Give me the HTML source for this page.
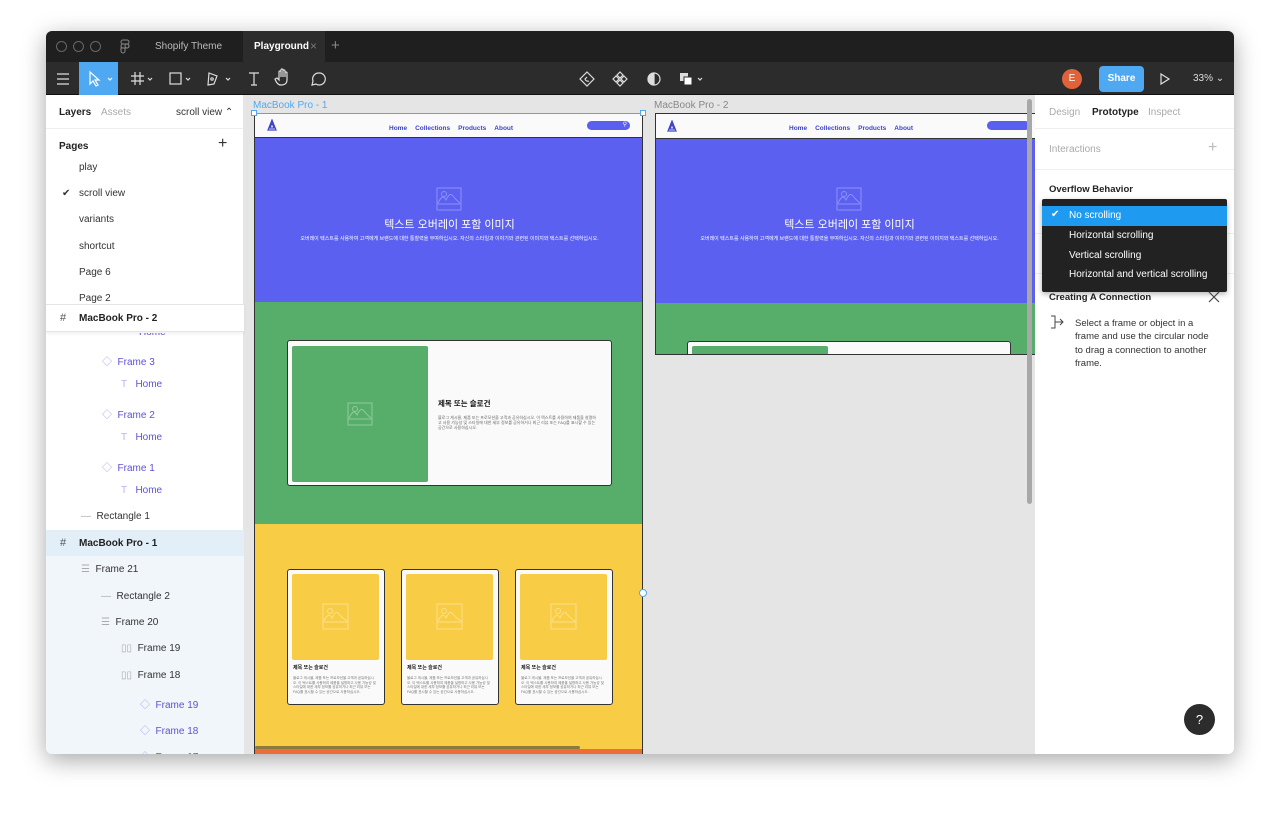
<!DOCTYPE html>
<html><head><meta charset="utf-8">
<style>
*{box-sizing:border-box;margin:0;padding:0}
body{width:1280px;height:815px;background:#fff;font-family:"Liberation Sans","Noto Sans CJK KR",sans-serif;position:relative;overflow:hidden;font-size:10px;color:#222}
.a{position:absolute}
.win{left:46px;top:31px;width:1188px;height:723px;border-radius:6px;overflow:hidden;box-shadow:0 6px 24px rgba(0,0,0,.35);background:#e5e5e5}
.tl{color:#333;font-size:10px}
.lp{color:#5d52d8}
.nav a{color:#4044c9;font-weight:bold;font-size:6.5px;margin:0 4px;text-decoration:none}
.kr{font-family:"Liberation Sans","Noto Sans CJK KR",sans-serif}
</style></head><body>
<div class="a win">
 <div class="a" style="left:0;top:0;width:1188px;height:31px;background:#1f1f1f"></div>
 <div class="a" style="left:197px;top:0;width:82px;height:31px;background:#2c2c2c"></div>
 <div class="a" style="left:10px;top:10px;width:11px;height:11px;border:1px solid #666;border-radius:50%"></div>
 <div class="a" style="left:27px;top:10px;width:11px;height:11px;border:1px solid #666;border-radius:50%"></div>
 <div class="a" style="left:44px;top:10px;width:11px;height:11px;border:1px solid #666;border-radius:50%"></div>
 <svg class="a" style="left:74px;top:8px" width="10" height="15" viewBox="0 0 10 15"><g fill="none" stroke="#888" stroke-width="1"><rect x="1" y="1" width="8" height="4" rx="2"/><rect x="1" y="5" width="8" height="4" rx="2"/><circle cx="7" cy="7" r="2"/><path d="M1 9h4v3a2 2 0 1 1-4 0z"/></g></svg>
 <div class="a" style="left:109px;top:10px;color:#bbb;font-size:10px">Shopify Theme</div>
 <div class="a" style="left:208px;top:10px;color:#fff;font-size:10px;font-weight:bold">Playground</div>
 <div class="a" style="left:264px;top:8px;color:#777;font-size:12px">×</div>
 <div class="a" style="left:285px;top:6px;color:#888;font-size:15px">+</div>
 <div class="a" style="left:0;top:31px;width:1188px;height:33px;background:#2c2c2c;border-bottom:1px solid #111"></div>
 <div class="a" style="left:33px;top:31px;width:39px;height:33px;background:#4fa9f2"></div>
 <svg class="a" style="left:0;top:31px" width="300" height="33"><g fill="none" stroke="#ddd" stroke-width="1.2">
  <path d="M11 12h12M11 17h12M11 22h12"/>
  <path d="M44 10l0 12 3-3 3 5 2-1-3-5 4 0z" stroke="#fff"/><path d="M62 16l2 2 2-2" stroke="#fff"/>
  <path d="M89 10v13M94 10v13M85 14h13M85 19h13"/><path d="M102 16l2 2 2-2"/>
  <rect x="124" y="11" width="11" height="11"/><path d="M140 16l2 2 2-2"/>
  <path d="M163 11l8 3 -3 8 -6 1z"/><circle cx="166" cy="17" r="1.2"/><path d="M180 16l2 2 2-2"/>
  <path d="M203 11h10M208 11v12M205 23h6"/>
  <path d="M235 23c-3 0-5-3-6-6l2-1 2 2v-8a1 1 0 0 1 2 0v5-7a1 1 0 0 1 2 0v7-6a1 1 0 0 1 2 0v6-4a1 1 0 0 1 2 0v7c0 3-2 5-6 5z"/>
  <path d="M273 11a6 6 0 1 1-3 11l-4 1 1-4a6 6 0 0 1 6-8z"/>
 </g></svg>
 <svg class="a" style="left:530px;top:31px" width="140" height="33"><g fill="none" stroke="#ddd" stroke-width="1.2">
  <path d="M11 10l7 7-7 7-7-7z"/><path d="M13 19a3 3 0 0 1-4-2l2-2"/>
  <path d="M44 10l3 3-3 3-3-3zM44 18l3 3-3 3-3-3zM40 14l3 3-3 3-3-3zM48 14l3 3-3 3-3-3z"/>
  <circle cx="78" cy="17" r="6"/><path d="M78 11a6 6 0 0 0 0 12z" fill="#ddd"/>
  <path d="M112 22l2 2 2-2" transform="translate(10 -6)"/>
 </g><rect x="104" y="11" width="8" height="8" fill="#ddd"/><rect x="108" y="15" width="8" height="8" fill="#fff" stroke="#2c2c2c"/></svg>
 <div class="a" style="left:1016px;top:38px;width:20px;height:20px;border-radius:50%;background:#e0623a;color:#fff;font-size:10px;text-align:center;line-height:20px">E</div>
 <div class="a" style="left:1053px;top:35px;width:45px;height:26px;border-radius:4px;background:#4fa9f2;color:#fff;font-size:10px;font-weight:bold;text-align:center;line-height:26px">Share</div>
 <svg class="a" style="left:1113px;top:41px" width="12" height="14"><path d="M2 2l8 5-8 5z" fill="none" stroke="#ddd" stroke-width="1.2"/></svg>
 <div class="a" style="left:1147px;top:42px;color:#ddd;font-size:10px">33% ⌄</div>
 <div class="a" style="left:0;top:64px;width:198px;height:659px;background:#fff;border-right:1px solid #e5e5e5"></div>
 <div class="a" style="left:13px;top:76px;font-size:10px;font-weight:bold;color:#222">Layers</div>
 <div class="a" style="left:55px;top:76px;font-size:10px;color:#aaa">Assets</div>
 <div class="a" style="left:130px;top:76px;font-size:10px;color:#333">scroll view ⌃</div>
 <div class="a" style="left:0;top:97px;width:198px;height:1px;background:#eee"></div>
 <div class="a" style="left:13px;top:110px;font-size:10px;font-weight:bold">Pages</div>
 <div class="a" style="left:172px;top:104px;font-size:16px;color:#333">+</div>
 <div class="a tl" style="left:33px;top:131px">play</div>
 <div class="a tl" style="left:16px;top:157px">✔</div>
 <div class="a tl" style="left:33px;top:157px">scroll view</div>
 <div class="a tl" style="left:33px;top:183px">variants</div>
 <div class="a tl" style="left:33px;top:210px">shortcut</div>
 <div class="a tl" style="left:33px;top:236px">Page 6</div>
 <div class="a tl" style="left:33px;top:262px">Page 2</div>
 <div class="a lp" style="left:93px;top:302px;overflow:hidden;height:5px;line-height:10px;font-size:10px"><span style="position:relative;top:-5px">Home</span></div>
 <div class="a" style="left:0;top:273px;width:198px;height:28px;background:#fff;border-top:1px solid #e5e5e5;border-bottom:1px solid #e5e5e5;box-shadow:0 2px 3px rgba(0,0,0,.06)"></div>
 <div class="a" style="left:14px;top:281px;font-size:11px;color:#555">#</div>
 <div class="a" style="left:33px;top:282px;font-size:10px;font-weight:bold">MacBook Pro - 2</div>
 <div class="a lp" style="left:56px;top:322px"><span style="color:#a9a0ee">◇</span>&nbsp; Frame 3</div>
 <div class="a lp" style="left:75px;top:348px"><span style="color:#b9b2f0">T</span>&nbsp;&nbsp; Home</div>
 <div class="a lp" style="left:56px;top:375px"><span style="color:#a9a0ee">◇</span>&nbsp; Frame 2</div>
 <div class="a lp" style="left:75px;top:401px"><span style="color:#b9b2f0">T</span>&nbsp;&nbsp; Home</div>
 <div class="a lp" style="left:56px;top:428px"><span style="color:#a9a0ee">◇</span>&nbsp; Frame 1</div>
 <div class="a lp" style="left:75px;top:454px"><span style="color:#b9b2f0">T</span>&nbsp;&nbsp; Home</div>
 <div class="a tl" style="left:35px;top:480px"><span style="color:#aaa">—</span>&nbsp; Rectangle 1</div>
 <div class="a" style="left:0;top:499px;width:198px;height:26px;background:#e2eef8"></div>
 <div class="a" style="left:0;top:525px;width:198px;height:198px;background:#f1f6fb"></div>
 <div class="a" style="left:14px;top:506px;font-size:11px;color:#555">#</div>
 <div class="a" style="left:33px;top:507px;font-size:10px;font-weight:bold">MacBook Pro - 1</div>
 <div class="a tl" style="left:35px;top:533px"><span style="color:#aaa">☰</span>&nbsp; Frame 21</div>
 <div class="a tl" style="left:55px;top:560px"><span style="color:#aaa">—</span>&nbsp; Rectangle 2</div>
 <div class="a tl" style="left:55px;top:586px"><span style="color:#aaa">☰</span>&nbsp; Frame 20</div>
 <div class="a tl" style="left:75px;top:612px"><span style="color:#aaa">▯▯</span>&nbsp; Frame 19</div>
 <div class="a tl" style="left:75px;top:639px"><span style="color:#aaa">▯▯</span>&nbsp; Frame 18</div>
 <div class="a lp" style="left:94px;top:665px"><span style="color:#a9a0ee">◇</span>&nbsp; Frame 19</div>
 <div class="a lp" style="left:94px;top:691px"><span style="color:#a9a0ee">◇</span>&nbsp; Frame 18</div>
 <div class="a lp" style="left:94px;top:717px"><span style="color:#a9a0ee">◇</span>&nbsp; Frame 17</div>

 <div class="a" style="left:207px;top:69px;color:#4fa9f2;font-size:10px">MacBook Pro - 1</div>
 <div class="a" style="left:608px;top:69px;color:#888;font-size:10px">MacBook Pro - 2</div>

 <div class="a" style="left:208px;top:82px;width:389px;height:641px;overflow:hidden;border-left:1px solid #333;border-right:1px solid #333">
  <div class="a" style="left:0;top:0;width:389px;height:25px;background:#fafafa;border-bottom:1px solid #333;border-top:1px solid #333"></div>
  <svg class="a" style="left:12px;top:6px" width="10" height="12"><path d="M5 1L1 11h8z M5 4L3 9h4z" fill="none" stroke="#4044c9" stroke-width="1.2"/></svg>
  <div class="a nav" style="left:130px;top:9px"><a>Home</a><a>Collections</a><a>Products</a><a>About</a></div>
  <div class="a" style="left:332px;top:8px;width:43px;height:9px;border-radius:5px;background:#5b5ff0;color:#fff;font-size:6px;text-align:right;padding-right:3px;line-height:9px">⚲</div>
  <div class="a" style="left:0;top:25px;width:389px;height:164px;background:#5b60f1"></div>
  <svg class="a" style="left:181px;top:74px" width="26" height="24"><g fill="none" stroke="#8d90f5" stroke-width="1"><rect x="1" y="1" width="24" height="22"/><path d="M1 17h24M2 16c3-6 5-8 8-3 2-4 4-7 6-5 2 2 4 5 8 8"/><circle cx="8" cy="7" r="2.5"/></g></svg>
  <div class="a kr" style="left:0;top:103px;width:389px;text-align:center;color:#fff;font-size:11px">텍스트 오버레이 포함 이미지</div>
  <div class="a kr" style="left:0;top:122px;width:389px;text-align:center;color:#fff;font-size:5px">오버레이 텍스트를 사용하여 고객에게 브랜드에 대한 통찰력을 부여하십시오. 자신의 스타일과 이야기와 관련된 이미지와 텍스트를 선택하십시오.</div>
  <div class="a" style="left:0;top:189px;width:389px;height:222px;background:#57ad6a"></div>
  <div class="a" style="left:32px;top:227px;width:325px;height:146px;background:#fafafa;border:1px solid #333;border-radius:3px"></div>
  <div class="a" style="left:37px;top:233px;width:136px;height:136px;background:#57ad6a;border-radius:2px"></div>
  <svg class="a" style="left:92px;top:289px" width="26" height="24"><g fill="none" stroke="#8fcb9b" stroke-width="1"><rect x="1" y="1" width="24" height="22"/><path d="M1 17h24M2 16c3-6 5-8 8-3 2-4 4-7 6-5 2 2 4 5 8 8"/><circle cx="8" cy="7" r="2.5"/></g></svg>
  <div class="a kr" style="left:183px;top:285px;font-size:7.5px;font-weight:bold;color:#111">제목 또는 슬로건</div>
  <div class="a kr" style="left:183px;top:302px;width:160px;font-size:4px;line-height:5px;color:#666">블로그 게시물, 제품 또는 프로모션을 고객과 공유하십시오. 이 텍스트를 사용하여 제품을 설명하고 사용 가능성 및 스타일에 대한 세부 정보를 공유하거나 최근 리뷰 또는 FAQ를 표시할 수 있는 공간으로 사용하십시오.</div>
  <div class="a" style="left:0;top:411px;width:389px;height:230px;background:#f8cd45"></div>
  <div class="a" style="left:0;top:636px;width:389px;height:5px;background:#ec6c3a"></div>
  <div class="a" style="left:0;top:633px;width:325px;height:3px;background:#8a7a3c;border-radius:2px"></div>
  <div class="a" style="left:32px;top:456px;width:98px;height:136px;background:#fafafa;border:1px solid #333;border-radius:3px"></div>
  <div class="a" style="left:146px;top:456px;width:98px;height:136px;background:#fafafa;border:1px solid #333;border-radius:3px"></div>
  <div class="a" style="left:260px;top:456px;width:98px;height:136px;background:#fafafa;border:1px solid #333;border-radius:3px"></div>
  <div class="a" style="left:37px;top:461px;width:87px;height:86px;background:#f8cd45;border-radius:2px"></div>
  <div class="a" style="left:151px;top:461px;width:87px;height:86px;background:#f8cd45;border-radius:2px"></div>
  <div class="a" style="left:265px;top:461px;width:87px;height:86px;background:#f8cd45;border-radius:2px"></div>
  <svg class="a" style="left:0;top:0" width="389" height="641"><defs><g id="im" fill="none" stroke="#fbe08a" stroke-width="1"><rect x="1" y="1" width="25" height="25"/><path d="M1 19h25M2 18c3-6 5-8 8-3 2-4 4-7 6-5 2 2 4 5 9 8"/><circle cx="8" cy="8" r="2.5"/></g></defs>
   <use href="#im" x="67" y="490"/><use href="#im" x="181" y="490"/><use href="#im" x="295" y="490"/></svg>
  <div class="a kr" style="left:38px;top:551px;font-size:5px;font-weight:bold;color:#111">제목 또는 슬로건</div>
  <div class="a kr" style="left:152px;top:551px;font-size:5px;font-weight:bold;color:#111">제목 또는 슬로건</div>
  <div class="a kr" style="left:266px;top:551px;font-size:5px;font-weight:bold;color:#111">제목 또는 슬로건</div>
  <div class="a kr" style="left:38px;top:563px;width:85px;font-size:3.5px;line-height:4.5px;color:#777">블로그 게시물, 제품 또는 프로모션을 고객과 공유하십시오. 이 텍스트를 사용하여 제품을 설명하고 사용 가능성 및 스타일에 대한 세부 정보를 공유하거나 최근 리뷰 또는 FAQ를 표시할 수 있는 공간으로 사용하십시오.</div>
  <div class="a kr" style="left:152px;top:563px;width:85px;font-size:3.5px;line-height:4.5px;color:#777">블로그 게시물, 제품 또는 프로모션을 고객과 공유하십시오. 이 텍스트를 사용하여 제품을 설명하고 사용 가능성 및 스타일에 대한 세부 정보를 공유하거나 최근 리뷰 또는 FAQ를 표시할 수 있는 공간으로 사용하십시오.</div>
  <div class="a kr" style="left:266px;top:563px;width:85px;font-size:3.5px;line-height:4.5px;color:#777">블로그 게시물, 제품 또는 프로모션을 고객과 공유하십시오. 이 텍스트를 사용하여 제품을 설명하고 사용 가능성 및 스타일에 대한 세부 정보를 공유하거나 최근 리뷰 또는 FAQ를 표시할 수 있는 공간으로 사용하십시오.</div>
 </div>
 <div class="a" style="left:208px;top:82px;width:389px;height:1px;background:#4fa9f2"></div>
 <div class="a" style="left:205px;top:79px;width:6px;height:6px;background:#fff;border:1px solid #4fa9f2"></div>
 <div class="a" style="left:594px;top:79px;width:6px;height:6px;background:#fff;border:1px solid #4fa9f2"></div>
 <div class="a" style="left:593px;top:558px;width:8px;height:8px;border-radius:50%;background:#fff;border:1px solid #4fa9f2"></div>

 <div class="a" style="left:609px;top:82px;width:380px;height:242px;overflow:hidden;border:1px solid #333;border-right:none">
  <div class="a" style="left:0;top:0;width:380px;height:25px;background:#fafafa;border-bottom:1px solid #333"></div>
  <svg class="a" style="left:11px;top:6px" width="10" height="12"><path d="M5 1L1 11h8z M5 4L3 9h4z" fill="none" stroke="#4044c9" stroke-width="1.2"/></svg>
  <div class="a nav" style="left:129px;top:8px"><a>Home</a><a>Collections</a><a>Products</a><a>About</a></div>
  <div class="a" style="left:331px;top:7px;width:43px;height:9px;border-radius:5px;background:#5b5ff0"></div>
  <div class="a" style="left:0;top:25px;width:380px;height:164px;background:#5b60f1"></div>
  <svg class="a" style="left:180px;top:73px" width="26" height="24"><g fill="none" stroke="#8d90f5" stroke-width="1"><rect x="1" y="1" width="24" height="22"/><path d="M1 17h24M2 16c3-6 5-8 8-3 2-4 4-7 6-5 2 2 4 5 8 8"/><circle cx="8" cy="7" r="2.5"/></g></svg>
  <div class="a kr" style="left:0;top:102px;width:387px;text-align:center;color:#fff;font-size:11px">텍스트 오버레이 포함 이미지</div>
  <div class="a kr" style="left:0;top:121px;width:387px;text-align:center;color:#fff;font-size:5px">오버레이 텍스트를 사용하여 고객에게 브랜드에 대한 통찰력을 부여하십시오. 자신의 스타일과 이야기와 관련된 이미지와 텍스트를 선택하십시오.</div>
  <div class="a" style="left:0;top:189px;width:380px;height:53px;background:#57ad6a"></div>
  <div class="a" style="left:31px;top:227px;width:324px;height:20px;background:#fafafa;border:1px solid #333;border-radius:3px"></div>
  <div class="a" style="left:36px;top:232px;width:136px;height:20px;background:#57ad6a;border-radius:2px"></div>
 </div>
 <div class="a" style="left:609px;top:323px;width:380px;height:1px;background:#333"></div>
 <div class="a" style="left:981px;top:68px;width:5px;height:405px;border-radius:3px;background:#a8a8a8"></div>

 <div class="a" style="left:989px;top:64px;width:199px;height:659px;background:#fff"></div>
 <div class="a" style="left:1003px;top:76px;color:#aaa;font-size:10px">Design</div>
 <div class="a" style="left:1046px;top:76px;color:#222;font-size:10px;font-weight:bold">Prototype</div>
 <div class="a" style="left:1102px;top:76px;color:#aaa;font-size:10px">Inspect</div>
 <div class="a" style="left:989px;top:97px;width:199px;height:1px;background:#eee"></div>
 <div class="a" style="left:1003px;top:113px;color:#aaa;font-size:10px">Interactions</div>
 <div class="a" style="left:1162px;top:108px;color:#bbb;font-size:16px">+</div>
 <div class="a" style="left:989px;top:138px;width:199px;height:1px;background:#eee"></div>
 <div class="a" style="left:1003px;top:153px;color:#222;font-size:9.5px;font-weight:bold">Overflow Behavior</div>
 <div class="a" style="left:989px;top:202px;width:199px;height:1px;background:#eee"></div>
 <div class="a" style="left:989px;top:242px;width:199px;height:1px;background:#eee"></div>
 <div class="a" style="left:996px;top:168px;width:185px;height:93px;background:#222;border-radius:2px;box-shadow:0 2px 6px rgba(0,0,0,.3)"></div>
 <div class="a" style="left:996px;top:175px;width:185px;height:20px;background:#1e9bf0"></div>
 <div class="a" style="left:1005px;top:178px;color:#fff;font-size:10px">✔</div>
 <div class="a" style="left:1023px;top:179px;color:#fff;font-size:10px">No scrolling</div>
 <div class="a" style="left:1023px;top:199px;color:#fff;font-size:10px">Horizontal scrolling</div>
 <div class="a" style="left:1023px;top:219px;color:#fff;font-size:10px">Vertical scrolling</div>
 <div class="a" style="left:1023px;top:238px;color:#fff;font-size:10px">Horizontal and vertical scrolling</div>
 <div class="a" style="left:1003px;top:261px;color:#222;font-size:9.5px;font-weight:bold">Creating A Connection</div>
 <svg class="a" style="left:1162px;top:260px" width="12" height="12"><path d="M1 1l10 10M11 1L1 11" stroke="#444" stroke-width="1.2"/></svg>
 <svg class="a" style="left:1003px;top:284px" width="16" height="14"><path d="M2 1h4v12H2M6 7h8M11 4l3 3-3 3" fill="none" stroke="#444" stroke-width="1"/></svg>
 <div class="a" style="left:1029px;top:286px;width:142px;color:#333;font-size:9.5px;line-height:13.3px">Select a frame or object in a frame and use the circular node to drag a connection to another frame.</div>
 <div class="a" style="left:1138px;top:673px;width:31px;height:31px;border-radius:50%;background:#2c2c2c;color:#fff;font-size:13px;text-align:center;line-height:31px">?</div>
</div>
</body></html>
